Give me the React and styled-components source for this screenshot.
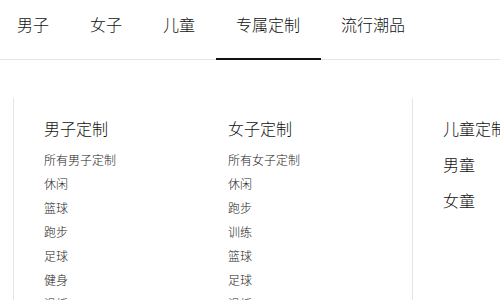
import React from "react";
import styled, { createGlobalStyle } from "styled-components";

const GlobalStyle = createGlobalStyle`
  body {
    margin: 0;
    background: #ffffff;
    font-family: "Noto Sans CJK SC", "Noto Sans", sans-serif;
    font-weight: 300;
    color: #111111;
    overflow: hidden;
  }
`;

const Nav = styled.nav`
  height: 59px;
  border-bottom: 1px solid #e5e5e5;
  display: flex;
  align-items: flex-start;
  gap: 41px;
  padding-left: 17px;
`;

const NavItem = styled.a`
  position: relative;
  height: 60px;
  line-height: 48px;
  font-size: 16px;
  color: #111111;
  white-space: nowrap;
  &::after {
    content: "";
    position: absolute;
    left: -20px;
    right: -21px;
    bottom: 0;
    height: 2px;
    background: ${(p) => (p.$active ? "#111111" : "transparent")};
  }
`;

const Panel = styled.div`
  display: flex;
  padding: 38px 0 0 13px;
  height: 202px;
`;

const Group = styled.div`
  display: flex;
  border-left: 1px solid #e5e5e5;
  padding: 18px 0 0 30px;
  width: ${(p) => p.$width || "auto"};
  box-sizing: border-box;
`;

const Column = styled.div`
  width: ${(p) => p.$width || "auto"};
  display: flex;
  flex-direction: column;
`;

const Heading = styled.div`
  font-size: 16px;
  line-height: 24px;
  margin-bottom: 8px;
  white-space: nowrap;
`;

const Item = styled.a`
  font-size: 12px;
  line-height: 24px;
  color: #222222;
`;

const BigItem = styled.a`
  font-size: 16px;
  line-height: 36px;
  color: #111111;
  &:first-of-type {
    margin-top: -2px;
  }
`;

const navItems = ["男子", "女子", "儿童", "专属定制", "流行潮品"];
const menCustom = ["所有男子定制", "休闲", "篮球", "跑步", "足球", "健身", "滑板"];
const womenCustom = ["所有女子定制", "休闲", "跑步", "训练", "篮球", "足球", "滑板"];

export default function App() {
  return (
    <>
      <GlobalStyle />
      <Nav>
        {navItems.map((n) => (
          <NavItem key={n} $active={n === "专属定制"}>
            {n}
          </NavItem>
        ))}
      </Nav>
      <Panel>
        <Group $width="400px">
          <Column $width="184px">
            <Heading>男子定制</Heading>
            {menCustom.map((i) => (
              <Item key={i}>{i}</Item>
            ))}
          </Column>
          <Column $width="184px">
            <Heading>女子定制</Heading>
            {womenCustom.map((i) => (
              <Item key={i}>{i}</Item>
            ))}
          </Column>
        </Group>
        <Group>
          <Column>
            <Heading>儿童定制</Heading>
            <BigItem>男童</BigItem>
            <BigItem>女童</BigItem>
          </Column>
        </Group>
      </Panel>
    </>
  );
}
